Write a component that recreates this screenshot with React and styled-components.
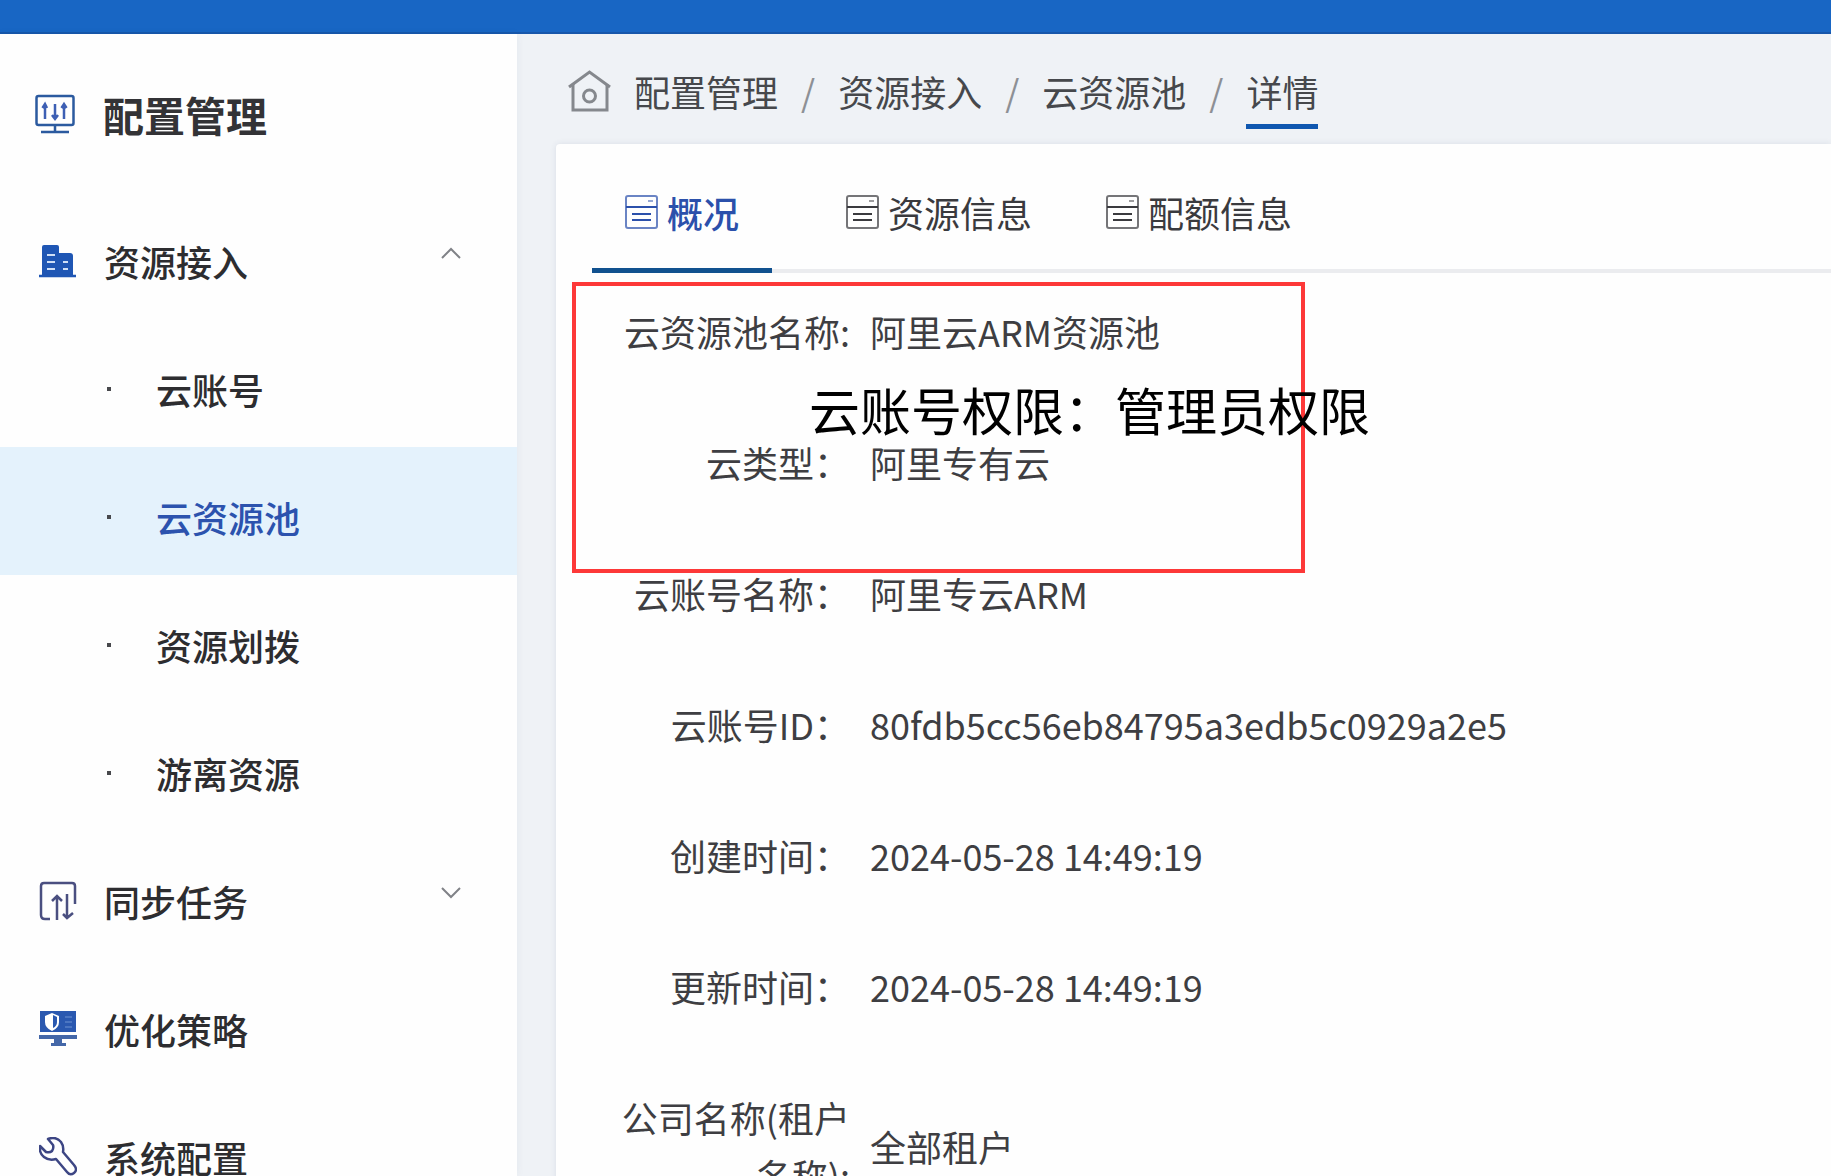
import React from "react";
import styled, { createGlobalStyle } from "styled-components";

const GlobalStyle = createGlobalStyle`
  * { box-sizing: border-box; }
  body {
    margin: 0;
    background: #eff2f6;
    color: #3e3e42;
    font-family: "Noto Sans CJK SC", sans-serif;
    font-size: 36px;
    line-height: 58px;
  }
`;

const Page = styled.div`
  display: flex;
  flex-direction: column;
  height: 100vh;
  overflow: hidden;
`;

const TopBar = styled.header`
  flex: none;
  height: 34px;
  background: #1866c4;
  border-bottom: 2px solid #1757ab;
`;

const Shell = styled.div`
  display: flex;
  flex: 1;
  min-height: 0;
`;

const Sidebar = styled.aside`
  flex: none;
  width: 517px;
  background: #fefefe;
  box-shadow: 0 0 8px rgba(40, 60, 100, 0.06);
`;

const SideTitle = styled.h1`
  display: flex;
  align-items: center;
  gap: 28px;
  height: 157px;
  margin: 0;
  padding: 2px 35px 0;
  font-size: 41px;
  font-weight: 700;
  color: #333336;
`;

const Menu = styled.ul`
  margin: 0;
  padding: 0;
  list-style: none;
`;

const MenuLink = styled.a`
  display: flex;
  align-items: center;
  gap: 27px;
  height: 128px;
  padding: 12px 56px 0 39px;
  font-weight: 500;
  text-decoration: none;
  color: #2d2d30;
`;

const MenuText = styled.span`
  flex: 1;
`;

const SubLink = styled(MenuLink)`
  gap: 45px;
  padding-left: 107px;
  background: ${(p) => (p.$active ? "#e4f2fc" : "transparent")};
  color: ${(p) => (p.$active ? "#2c53ae" : "#2d2d30")};
`;

const Dot = styled.span`
  width: 4px;
  height: 4px;
  background: #47484c;
`;

const Main = styled.main`
  display: flex;
  flex-direction: column;
  flex: 1;
  min-width: 0;
  padding-left: 39px;
`;

const Crumbs = styled.nav`
  display: flex;
  flex: none;
  align-items: center;
  gap: 23px;
  height: 110px;
  padding: 4px 0 0 12px;
`;

const Crumb = styled.a`
  height: 76px;
  padding-top: 8px;
  line-height: 60px;
  color: #46484c;
  text-decoration: none;
  border-bottom: 5px solid ${(p) => (p.$current ? "#0f57b0" : "transparent")};
`;

const Slash = styled.span`
  color: #8d9095;
`;

const Panel = styled.section`
  position: relative;
  flex: 1;
  background: #fefefe;
  border-top-left-radius: 4px;
  box-shadow: 0 0 6px rgba(40, 60, 100, 0.1);
`;

const Tabs = styled.div`
  display: flex;
  gap: 8px;
  margin-left: 36px;
  border-bottom: 4px solid #ebecef;
`;

const Tab = styled.button`
  display: flex;
  align-items: center;
  gap: 9px;
  height: 129px;
  margin: 0 ${(p) => (p.$active ? "33px" : "0")} -4px 0;
  padding: 12px 33px 0;
  border: 0;
  border-bottom: 5px solid ${(p) => (p.$active ? "#11518f" : "transparent")};
  background: none;
  font: inherit;
  font-weight: ${(p) => (p.$active ? 500 : 400)};
  color: ${(p) => (p.$active ? "#2b50ab" : "#3a3a3e")};
`;

const Details = styled.dl`
  display: flex;
  flex-direction: column;
  gap: 73px;
  margin: 0;
  padding: 29px 36px;
`;

const Field = styled.div`
  display: flex;
  align-items: center;
  gap: 20px;
`;

const Term = styled.dt`
  flex: none;
  width: 258px;
  padding-left: 24px;
  text-align: right;
`;

const Value = styled.dd`
  margin: 0;
`;

const Marker = styled.div`
  position: absolute;
  top: 138px;
  left: 16px;
  width: 733px;
  height: 291px;
  border: 4px solid #fd3838;
  pointer-events: none;
`;

const Note = styled.p`
  position: absolute;
  top: 228px;
  left: 253px;
  margin: 0;
  font-size: 51px;
  line-height: 74px;
  white-space: nowrap;
  color: #000;
`;

const Icon = styled.svg`
  display: block;
  flex: none;
  fill: none;
  stroke: currentColor;
  color: ${(p) => p.$color || "inherit"};
`;

const Arrow = styled(Icon)`
  margin-bottom: 16px;
`;

const MonitorIcon = () => (
  <Icon $color="#2b5a9f" width="40" height="40" viewBox="0 0 40 40" strokeWidth="2.500" aria-hidden="true">
    <rect x="1.500" y="2" width="37" height="29" rx="2" />
    <path d="M20 31v7M6 38h28" />
    <path d="M10 10v15M7.500 14L10 10l2 4M20 10v15M17 21l3 4 3-4M29 10v15M26.500 14l2.500-4 2.500 4" stroke="#3d5fb4" />
  </Icon>
);

const BuildingIcon = () => (
  <Icon $color="#1f56b4" width="38" height="36" viewBox="0 0 38 36" strokeWidth="2.500" aria-hidden="true">
    <path d="M3 33V4q0-2 2-2h13q2 0 2 2v6h11q3 0 3 3v20z" fill="currentColor" stroke="none" />
    <path d="M0 33h37" />
    <path d="M8 12h8M8 19h8M8 26h8M24 19h5M24 26h5" stroke="#cfdff6" strokeWidth="2" />
  </Icon>
);

const SyncIcon = () => (
  <Icon $color="#4a4f80" width="38" height="40" viewBox="0 0 38 40" strokeWidth="2.500" aria-hidden="true">
    <path d="M11 38H6q-4 0-4-4V5q0-3 3-3h28q3 0 3 3v18" />
    <path d="M18 39V16M13 20l5-5 5 5M28 13v24M34 32l-6 5-4-4" />
  </Icon>
);

const PolicyIcon = () => (
  <Icon $color="#2a58b0" width="38" height="38" viewBox="0 0 38 38" aria-hidden="true">
    <rect x="1" y="1" width="36" height="21" fill="currentColor" stroke="none" />
    <path d="M0 25h38v4H0zM15 29h8v4h4v3H12v-3h3z" fill="#4467a8" stroke="none" />
    <path d="M13 3l7 3v6q0 6-7 9-7-3-7-9V6z" fill="#fff" stroke="none" />
    <path d="M14 5l4 2v5q0 4-4 6z" fill="currentColor" stroke="none" />
    <path d="M26 7h7M26 12h7M26 17h7" stroke="#6f93d2" strokeWidth="1" />
  </Icon>
);

const WrenchIcon = () => (
  <Icon $color="#3d4684" width="38" height="40" viewBox="0 0 38 40" strokeWidth="2.500" strokeLinejoin="round" aria-hidden="true">
    <path d="M9 2q8-3 13 3 3 4 2 10l11 13q4 5 0 8-4 3-7-1L17 22q-7 2-12-2-5-4-4-11l6 6q4 1 6-1 2-3 1-6z" />
  </Icon>
);

const Chevron = ({ up }) => (
  <Arrow $color="#808287" width="20" height="12" viewBox="0 0 20 12" strokeWidth="2" aria-hidden="true">
    <path d={up ? "M1 11l9-9 9 9" : "M1 1l9 9 9-9"} />
  </Arrow>
);

const HomeIcon = () => (
  <Icon $color="#85888d" width="43" height="44" viewBox="0 0 43 44" strokeWidth="3" aria-hidden="true">
    <path d="M1 18L21.500 3 42 18" />
    <path d="M5 15v26h34V15" />
    <circle cx="21.500" cy="27" r="6" />
  </Icon>
);

const SheetIcon = () => (
  <Icon width="33" height="34" viewBox="0 0 33 34" strokeWidth="2" aria-hidden="true">
    <rect x="1" y="1" width="31" height="32" rx="2" strokeOpacity="0.7" />
    <path d="M1 12h31M7 19h19M7 25h19" />
    <path d="M23 6h5" strokeWidth="1" />
  </Icon>
);

const subItems = ["云账号", "云资源池", "资源划拨", "游离资源"];
const crumbs = ["配置管理", "资源接入", "云资源池", "详情"];
const tabs = ["概况", "资源信息", "配额信息"];
const fields = [
  ["云资源池名称:", "阿里云ARM资源池"],
  ["云类型：", "阿里专有云"],
  ["云账号名称：", "阿里专云ARM"],
  ["云账号ID：", "80fdb5cc56eb84795a3edb5c0929a2e5"],
  ["创建时间：", "2024-05-28 14:49:19"],
  ["更新时间：", "2024-05-28 14:49:19"],
  ["公司名称(租户名称):", "全部租户"],
];

export default function App() {
  return (
    <Page>
      <GlobalStyle />
      <TopBar />
      <Shell>
        <Sidebar>
          <SideTitle>
            <MonitorIcon />
            配置管理
          </SideTitle>
          <Menu>
            <li>
              <MenuLink href="#access">
                <BuildingIcon />
                <MenuText>资源接入</MenuText>
                <Chevron up />
              </MenuLink>
              <Menu>
                {subItems.map((name) => (
                  <li key={name}>
                    <SubLink href="#pool" $active={name === "云资源池"}>
                      <Dot />
                      <MenuText>{name}</MenuText>
                    </SubLink>
                  </li>
                ))}
              </Menu>
            </li>
            <li>
              <MenuLink href="#sync">
                <SyncIcon />
                <MenuText>同步任务</MenuText>
                <Chevron />
              </MenuLink>
            </li>
            <li>
              <MenuLink href="#policy">
                <PolicyIcon />
                <MenuText>优化策略</MenuText>
              </MenuLink>
            </li>
            <li>
              <MenuLink href="#system">
                <WrenchIcon />
                <MenuText>系统配置</MenuText>
              </MenuLink>
            </li>
          </Menu>
        </Sidebar>
        <Main>
          <Crumbs>
            <HomeIcon />
            {crumbs.map((name, i) => (
              <React.Fragment key={name}>
                {i > 0 && <Slash>/</Slash>}
                <Crumb href="#crumb" $current={i === crumbs.length - 1}>
                  {name}
                </Crumb>
              </React.Fragment>
            ))}
          </Crumbs>
          <Panel>
            <Tabs role="tablist">
              {tabs.map((name, i) => (
                <Tab key={name} type="button" role="tab" aria-selected={i === 0} $active={i === 0}>
                  <SheetIcon />
                  {name}
                </Tab>
              ))}
            </Tabs>
            <Details>
              {fields.map(([term, value]) => (
                <Field key={term}>
                  <Term>{term}</Term>
                  <Value>{value}</Value>
                </Field>
              ))}
            </Details>
            <Marker />
            <Note>云账号权限：管理员权限</Note>
          </Panel>
        </Main>
      </Shell>
    </Page>
  );
}
